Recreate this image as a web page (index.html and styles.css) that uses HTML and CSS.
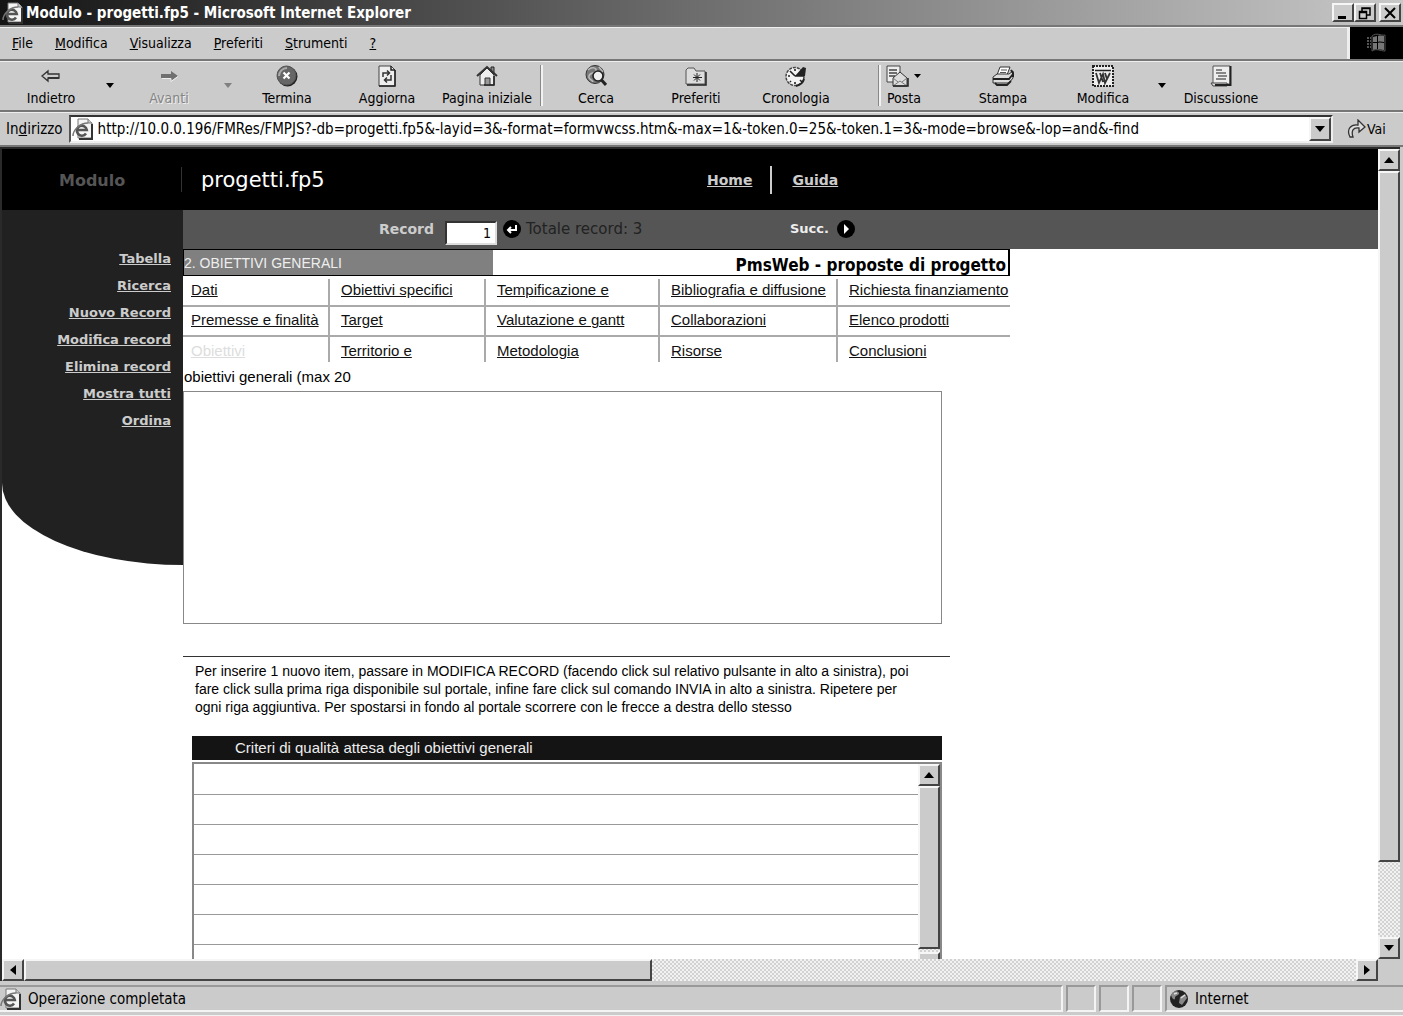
FILE: index.html
```html
<!DOCTYPE html>
<html lang="it">
<head>
<meta charset="utf-8">
<title>Modulo - progetti.fp5 - Microsoft Internet Explorer</title>
<link rel="stylesheet" href="styles.css">
</head>
<body>
<svg class="defs" width="0" height="0" aria-hidden="true">
  <symbol id="ie-page" viewBox="0 0 22 22">
    <path d="M6 1h10l4 4v15H6z" fill="#f4f4f4" stroke="#777"/>
    <path d="M20 6v15H7" fill="none" stroke="#333" stroke-width="2"/>
    <path d="M16 1v4h4" fill="#ccc" stroke="#777"/>
    <path d="M14 15.500a5 5 0 1 1 .8-3.500H6" fill="none" stroke="#555" stroke-width="2.600"/>
    <path d="M1 18C1 12 8 5 16 5" fill="none" stroke="#777" stroke-width="1.500"/>
  </symbol>
</svg>

<header class="titlebar">
  <svg class="page-icon" aria-hidden="true"><use href="#ie-page"/></svg>
  <h1>Modulo - progetti.fp5 - Microsoft Internet Explorer</h1>
  <button class="win" aria-label="Riduci a icona"><svg width="14" height="14" viewBox="0 0 14 14"><path d="M2 11.500h8" stroke="#000" stroke-width="3"/></svg></button>
  <button class="win" aria-label="Ripristina"><svg width="14" height="14" viewBox="0 0 14 14"><path d="M4 5V2h8v7H9M4 2.500h8M1.500 5.500h7v7h-7zM1 6.500h8" fill="none" stroke="#000" stroke-width="1.500"/></svg></button>
  <button class="win close" aria-label="Chiudi"><svg width="14" height="14" viewBox="0 0 14 14"><path d="M2 2l10 10M12 2L2 12" stroke="#000" stroke-width="2"/></svg></button>
</header>

<nav class="menubar">
  <button><u>F</u>ile</button>
  <button><u>M</u>odifica</button>
  <button><u>V</u>isualizza</button>
  <button><u>P</u>referiti</button>
  <button><u>S</u>trumenti</button>
  <button><u>?</u></button>
  <span class="throbber"><svg width="24" height="22" viewBox="0 0 24 22"><path d="M8 5l4-1v6H8zM13 4c2-1 4 0 6 0v6c-2 0-4-1-6 0zM8 11h4v6l-4 1zM13 11c2-1 4 0 6 0v7c-2 0-4-1-6 0z" fill="#777"/><path d="M2 6h4M2 9h4M2 12h4M2 15h4" stroke="#555" stroke-width="2" stroke-dasharray="2 1"/><path d="M7 4c5-4 8 0 13-1v16c-5 0-8-3-13 0z" fill="none" stroke="#555"/></svg></span>
</nav>

<div class="toolbar">
  <button class="tool"><svg width="22" height="22" viewBox="0 0 22 22"><path d="M2 11l6-5v3h11v4H8v3z" fill="#ccc" stroke="#333" stroke-width="1.300"/><path d="M8 13h11" stroke="#333" stroke-width="2"/></svg>Indietro</button>
  <button class="drop" aria-label="Cronologia indietro"><svg width="8" height="5" viewBox="0 0 8 5"><path d="M0 0h8L4 5z"/></svg></button>
  <button class="tool off"><svg width="22" height="22" viewBox="0 0 22 22"><path d="M20 11l-7-5v3H3v4h10v3z" fill="#707070"/><path d="M4 13.500h9v3l7-5" fill="none" stroke="#eee"/></svg>Avanti</button>
  <button class="drop off" aria-label="Cronologia avanti"><svg width="8" height="5" viewBox="0 0 8 5"><path d="M0 0h8L4 5z" fill="#808080"/></svg></button>
  <button class="tool"><svg width="22" height="22" viewBox="0 0 22 22"><circle cx="11.500" cy="11.500" r="10" fill="#222"/><circle cx="10.500" cy="10.500" r="9.500" fill="#666" stroke="#555"/><path d="M3 11a8 8 0 0 1 8-8" fill="none" stroke="#aaa" stroke-width="2"/><path d="M7.500 7.500l6 6M13.500 7.500l-6 6" stroke="#fff" stroke-width="2.200"/></svg>Termina</button>
  <button class="tool"><svg width="22" height="22" viewBox="0 0 22 22"><path d="M3 1h12l4 4v16H3z" fill="#eee" stroke="#444"/><path d="M15 1v4h4M19 5v16H3" fill="none" stroke="#222" stroke-width="1.500"/><path d="M7 12V8h6M11 5.500l2.500 2.500-2.500 2.500M15 10v5H9M11 12.500l-2.500 2.500 2.500 2.500" fill="none" stroke="#333" stroke-width="1.500"/></svg>Aggiorna</button>
  <button class="tool"><svg width="22" height="22" viewBox="0 0 22 22"><path d="M15 2h3v7h-3z" fill="#888" stroke="#222"/><path d="M4 10v10h14V10l-7-7z" fill="#eee" stroke="#333"/><path d="M1 11L11 2l10 9" fill="none" stroke="#333" stroke-width="2"/><path d="M9 20v-7h5v7" fill="#999" stroke="#333"/><path d="M18 11v9H8" fill="none" stroke="#222" stroke-width="1.500"/></svg>Pagina iniziale</button>
  <span class="sep"></span>
  <button class="tool"><svg width="22" height="22" viewBox="0 0 22 22"><circle cx="10" cy="9.500" r="9" fill="#777" stroke="#333"/><path d="M3 5c4-4 9-2 8 1s-6 1-7 5 3 3 4 6M14 2l4 5" fill="none" stroke="#bbb" stroke-width="1.500"/><circle cx="13" cy="11" r="5" fill="#eee" stroke="#222" stroke-width="1.600"/><path d="M16.500 15l4.500 5" stroke="#222" stroke-width="3"/></svg>Cerca</button>
  <button class="tool"><svg width="22" height="22" viewBox="0 0 22 22"><path d="M1 19V5l2-2h6l2 3h9v13z" fill="#ddd" stroke="#555"/><path d="M21 7v13H2" fill="none" stroke="#222" stroke-width="1.500"/><path d="M12 8v9M8 12.500h9M9 9.500l6 6M15 9.500l-6 6" stroke="#222"/></svg>Preferiti</button>
  <button class="tool"><svg width="24" height="22" viewBox="0 0 24 22"><circle cx="11" cy="11.500" r="9" fill="#f2f2f2" stroke="#444" stroke-width="1.500" stroke-dasharray="3 1"/><path d="M11 11l8-9 3 1-1 8z" fill="#222"/><path d="M11 11L6 6M11 11h9M11 4v2M4 11h2M11 17v2M7 16l-1 1M16 15l2 2" stroke="#222" stroke-width="1.600"/><path d="M20 14c-1 4-4 6-8 7" fill="none" stroke="#222" stroke-width="2"/></svg>Cronologia</button>
  <span class="sep wide"></span>
  <button class="tool mail"><svg width="36" height="22" viewBox="0 0 36 22"><path d="M1 1h13v16H1z" fill="#eee" stroke="#444"/><path d="M3 5h8M3 8h8M3 11h6" stroke="#444" stroke-width="1.500"/><path d="M7 13l7-6 7 6v8H7z" fill="#ddd" stroke="#333"/><path d="M7 21l7-5 7 5M7 13l5 4M21 13l-5 4" fill="none" stroke="#777"/><path d="M7 21h15v-8" fill="none" stroke="#222" stroke-width="1.500"/><path d="M28 9h7l-3.500 4z"/></svg>Posta</button>
  <button class="tool"><svg width="22" height="22" viewBox="0 0 22 22"><path d="M5 10l3-8h10l-3 8z" fill="#fff" stroke="#333"/><path d="M9 5h6M8 7.500h6" stroke="#555"/><path d="M1 12l4-3h12l4-3v7l-4 5H1z" fill="#ddd" stroke="#333"/><path d="M1 14h16l4-5M3 18l2 2h10l4-4" fill="none" stroke="#222" stroke-width="1.800"/><path d="M19 5l2 3v4" fill="none" stroke="#222" stroke-width="2"/></svg>Stampa</button>
  <button class="tool"><svg width="22" height="22" viewBox="0 0 22 22"><path d="M1 1h20v20H1z" fill="#eee" stroke="#222" stroke-width="2" stroke-dasharray="2 1"/><path d="M3 5.500h16" stroke="#222" stroke-width="1.500"/><path d="M4 8l3 10 4-9 2 9 5-10M8 8l3 9M13 8l2 6" fill="none" stroke="#333" stroke-width="1.800"/></svg>Modifica</button>
  <button class="drop" aria-label="Scegli editor"><svg width="8" height="5" viewBox="0 0 8 5"><path d="M0 0h8L4 5z"/></svg></button>
  <button class="tool"><svg width="22" height="22" viewBox="0 0 22 22"><path d="M3 1h17v18H3z" fill="#eee" stroke="#555"/><path d="M1 18h16v3H3z" fill="#ddd" stroke="#444"/><path d="M20.500 1v19H5" fill="none" stroke="#222" stroke-width="2"/><path d="M6 5h6M6 8h10M8 11h9M6 14h10" stroke="#666" stroke-width="1.500"/></svg>Discussione</button>
</div>

<form class="address">
  <label for="url">In<u>d</u>irizzo</label>
  <div class="combo">
    <svg class="page-icon" aria-hidden="true"><use href="#ie-page"/></svg>
    <input id="url" type="text" value="http://10.0.0.196/FMRes/FMPJS?-db=progetti.fp5&amp;-layid=3&amp;-format=formvwcss.htm&amp;-max=1&amp;-token.0=25&amp;-token.1=3&amp;-mode=browse&amp;-lop=and&amp;-find">
    <button type="button" class="bevel" aria-label="Apri elenco"><svg width="10" height="6" viewBox="0 0 10 6"><path d="M0 0h10L5 6z"/></svg></button>
  </div>
  <button type="button" class="go"><svg width="20" height="20" viewBox="0 0 20 20"><path d="M3 18C-1 10 4 5 11 6V1l7 7-6 5V9C6 8 4 12 6 18z" fill="#ddd" stroke="#333" stroke-width="1.300"/></svg>Vai</button>
</form>

<div class="viewport">
  <div class="page">
    <header class="site">
      <strong class="kind">Modulo</strong>
      <h2>progetti.fp5</h2>
      <nav><a href="#home">Home</a><a href="#guida">Guida</a></nav>
    </header>
    <div class="columns">
      <nav class="side">
        <a href="#tabella">Tabella</a>
        <a href="#ricerca">Ricerca</a>
        <a href="#nuovo">Nuovo Record</a>
        <a href="#modifica">Modifica record</a>
        <a href="#elimina">Elimina record</a>
        <a href="#tutti">Mostra tutti</a>
        <a href="#ordina">Ordina</a>
      </nav>
      <main>
        <form class="recordbar">
          <label for="rec">Record</label>
          <input id="rec" type="text" value="1">
          <button type="button" aria-label="Vai al record"><svg width="18" height="18" viewBox="0 0 18 18"><circle cx="9" cy="9" r="9"/><path d="M13 5v5H5M8 7l-3 3 3 3" fill="none" stroke="#fff" stroke-width="2"/></svg></button>
          <span class="total">Totale record: 3</span>
          <button type="button" class="next">Succ.<svg width="18" height="18" viewBox="0 0 18 18"><circle cx="9" cy="9" r="9"/><path d="M7 4l5 5-5 5z" fill="#fff"/></svg></button>
        </form>
        <div class="layout">
          <div class="heading">
            <span class="section">2. OBIETTIVI GENERALI</span>
            <strong>PmsWeb - proposte di progetto</strong>
          </div>
          <table class="tabs">
            <colgroup><col class="c1"><col class="c2"><col class="c3"><col class="c4"><col class="c5"></colgroup>
            <tr><td><a href="#t1">Dati</a></td><td><a href="#t4">Obiettivi specifici</a></td><td><a href="#t7">Tempificazione e</a></td><td><a href="#t10">Bibliografia e diffusione</a></td><td><a href="#t13">Richiesta finanziamento</a></td></tr>
            <tr><td><a href="#t2">Premesse e finalità</a></td><td><a href="#t5">Target</a></td><td><a href="#t8">Valutazione e gantt</a></td><td><a href="#t11">Collaborazioni</a></td><td><a href="#t14">Elenco prodotti</a></td></tr>
            <tr><td><a href="#t3" class="current">Obiettivi</a></td><td><a href="#t6">Territorio e</a></td><td><a href="#t9">Metodologia</a></td><td><a href="#t12">Risorse</a></td><td><a href="#t15">Conclusioni</a></td></tr>
          </table>
          <label class="field" for="goals">obiettivi generali (max 20</label>
          <textarea id="goals"></textarea>
          <hr>
          <p class="note">Per inserire 1 nuovo item, passare in MODIFICA RECORD (facendo click sul relativo pulsante in alto a sinistra), poi<br>fare click sulla prima riga disponibile sul portale, infine fare click sul comando INVIA in alto a sinistra. Ripetere per<br>ogni riga aggiuntiva. Per spostarsi in fondo al portale scorrere con le frecce a destra dello stesso</p>
          <section class="portal">
            <h3>Criteri di qualità attesa degli obiettivi generali</h3>
            <div class="list">
              <table>
                <tr><td></td></tr><tr><td></td></tr><tr><td></td></tr><tr><td></td></tr><tr><td></td></tr><tr><td></td></tr><tr><td></td></tr>
              </table>
              <div class="scroll inner">
                <button class="bevel" aria-label="Su"><svg width="10" height="6" viewBox="0 0 10 6"><path d="M0 6h10L5 0z"/></svg></button>
                <div class="bevel thumb"></div>
                <button class="bevel" aria-label="Giù"><svg width="10" height="6" viewBox="0 0 10 6"><path d="M0 0h10L5 6z"/></svg></button>
              </div>
            </div>
          </section>
        </div>
      </main>
    </div>
  </div>
  <div class="scroll vertical">
    <button class="bevel" aria-label="Scorri su"><svg width="10" height="6" viewBox="0 0 10 6"><path d="M0 6h10L5 0z"/></svg></button>
    <div class="bevel thumb"></div>
    <div class="rest"></div>
    <button class="bevel" aria-label="Scorri giù"><svg width="10" height="6" viewBox="0 0 10 6"><path d="M0 0h10L5 6z"/></svg></button>
  </div>
  <div class="scroll horizontal">
    <button class="bevel" aria-label="Scorri a sinistra"><svg width="6" height="10" viewBox="0 0 6 10"><path d="M6 0v10L0 5z"/></svg></button>
    <div class="bevel thumb"></div>
    <div class="rest"></div>
    <button class="bevel" aria-label="Scorri a destra"><svg width="6" height="10" viewBox="0 0 6 10"><path d="M0 0v10l6-5z"/></svg></button>
  </div>
  <div class="corner"></div>
</div>

<footer class="status">
  <div class="cell message"><svg class="page-icon" aria-hidden="true"><use href="#ie-page"/></svg>Operazione completata</div>
  <div class="cell"></div>
  <div class="cell"></div>
  <div class="cell"></div>
  <div class="cell zone"><svg width="20" height="20" viewBox="0 0 20 20"><circle cx="10" cy="10" r="9" fill="#222"/><path d="M2 6c3-5 7-4 8-2s-4 2-4 5-3 1-4-3zM11 8l5-3 2 4-5 7-3-2z" fill="#888"/><path d="M12 9l4-3M5 5l3-1" stroke="#ddd" stroke-width="1.500"/></svg>Internet</div>
</footer>
</body>
</html>
```
FILE: styles.css
```css
* { box-sizing: border-box; }

body {
  margin: 0;
  height: 100vh;
  display: flex;
  flex-direction: column;
  background: #cbcbcb;
  color: #000;
  font: 15px/18px "DejaVu Sans Condensed", "DejaVu Sans", sans-serif;
  overflow: hidden;
}

svg { display: block; flex: none; }
.defs { position: absolute; }
.page-icon { width: 22px; height: 22px; }

button {
  margin: 0;
  padding: 0;
  border: 0;
  background: none;
  color: inherit;
  font: inherit;
}

h1, h2, h3, p { margin: 0; font: inherit; }

.bevel, .win {
  display: grid;
  place-items: center;
  background: #cbcbcb;
  border: 2px solid;
  border-color: #f6f6f6 #444 #444 #f6f6f6;
}

/* Window chrome */
.titlebar {
  display: flex;
  align-items: center;
  height: 25px;
  flex: none;
  padding: 0 2px;
  background: linear-gradient(90deg, #141414, #c8c8c8);
  color: #fff;
}
.titlebar h1 { flex: 1; margin-left: 2px; font-weight: bold; font-size: 15px; }
.win { width: 22px; height: 19px; }
.close { margin-left: 3px; }

.menubar {
  display: flex;
  align-items: center;
  gap: 22px;
  height: 36px;
  flex: none;
  padding-left: 12px;
  border: solid #777;
  border-width: 2px 0;
  box-shadow: inset 0 1px #eee;
  font-size: 14px;
}
.throbber {
  display: grid;
  place-items: center;
  align-self: stretch;
  width: 56px;
  margin-left: auto;
  border-left: 3px solid #eee;
  background: #000;
}

.toolbar {
  display: flex;
  height: 51px;
  flex: none;
  padding-left: 1px;
  border-bottom: 2px solid #777;
  box-shadow: inset 0 1px #eee;
  font-size: 14px;
}
.tool {
  display: flex;
  flex-direction: column;
  align-items: center;
  gap: 2px;
  width: 100px;
  padding-top: 4px;
}
.drop { display: grid; place-items: center; width: 18px; }
.off { color: #858585; text-shadow: 1px 1px #eee; }
.sep {
  width: 3px;
  margin: 4px 3px;
  border: solid;
  border-width: 0 2px 0 1px;
  border-color: #888 #f2f2f2 #888 #888;
}
.sep.wide { margin-left: 32px; margin-right: 0; }
.mail { width: 72px; padding-right: 26px; }

.address {
  display: flex;
  align-items: center;
  height: 35px;
  flex: none;
  padding-left: 6px;
  border-bottom: 2px solid #777;
  box-shadow: inset 0 1px #eee;
}
.combo {
  display: flex;
  align-items: center;
  flex: 1;
  height: 28px;
  margin-left: 6px;
  padding-left: 1px;
  background: #fff;
  border: 2px solid;
  border-color: #333 #eee #eee #555;
}
.combo input {
  flex: 1;
  min-width: 0;
  padding: 0 4px;
  border: 0;
  background: none;
  font: inherit;
}
.combo .bevel { width: 22px; height: 24px; }
.go { display: flex; align-items: center; width: 70px; padding-left: 14px; font-size: 14px; }

/* Browser viewport with its scroll bars */
.viewport {
  display: grid;
  grid-template-columns: 1fr 22px;
  grid-template-rows: 1fr 22px;
  flex: 1;
  min-height: 0;
  margin-right: 3px;
  border: solid #2a2a2a;
  border-width: 2px 0 0 2px;
}
.page { overflow: hidden; min-width: 0; min-height: 0; background: #fff; }
.scroll {
  display: flex;
  background: repeating-conic-gradient(#f2f2f2 0 25%, #d2d2d2 0 50%) 0 0 / 4px 4px;
}
.scroll > button { flex: none; width: 22px; height: 22px; }
.vertical { flex-direction: column; }
.vertical .thumb { flex: 691; }
.vertical .rest { flex: 75; }
.horizontal .thumb { flex: 626; }
.horizontal .rest { flex: 707; }

/* Site header */
.site {
  display: flex;
  align-items: center;
  height: 61px;
  background: #000;
  color: #fff;
  font-family: "DejaVu Sans", sans-serif;
}
.kind {
  width: 180px;
  padding: 3px 0 0 57px;
  line-height: 22px;
  border-right: 1px solid #333;
  color: #555;
  font-size: 16px;
}
.site h2 { width: 525px; padding-left: 19px; font-size: 21px; }
.site nav { display: flex; font-weight: bold; font-size: 14px; }
.site nav a { color: #ccc; line-height: 28px; }
.site nav a + a { margin-left: 18px; padding-left: 20px; border-left: 2px solid #ccc; }

.columns { display: flex; align-items: flex-start; }
.side {
  display: flex;
  flex-direction: column;
  align-items: flex-end;
  width: 181px;
  height: 355px;
  flex: none;
  padding: 35px 12px 0 0;
  background: #212121;
  border-bottom-left-radius: 181px 82px;
  font: bold 13px/27px "DejaVu Sans", sans-serif;
}
.side a { color: #ccc; }
main { flex: 1; min-width: 0; }

.recordbar {
  display: flex;
  align-items: center;
  height: 39px;
  padding-bottom: 2px;
  background: #555;
  font-family: "DejaVu Sans", sans-serif;
  font-size: 14px;
}
.recordbar label { width: 251px; text-align: right; font-weight: bold; color: #ccc; }
.recordbar input {
  width: 52px;
  height: 24px;
  margin: 8px 6px 0 11px;
  padding: 0 4px;
  border: 2px solid;
  border-color: #333 #ddd #ddd #333;
  background: #fff;
  text-align: right;
  font: 14px "DejaVu Sans Condensed", sans-serif;
}
.total { width: 269px; padding-left: 5px; color: #222; font-size: 15px; }
.next { display: flex; align-items: center; gap: 8px; font-weight: bold; color: #eee; font-size: 13px; }

/* Record layout */
.layout { max-width: 827px; font-family: "Liberation Sans", sans-serif; font-size: 15px; }
.heading {
  display: flex;
  justify-content: space-between;
  height: 27px;
  border: 1px solid #000;
  border-right-width: 2px;
  line-height: 27px;
}
.section { width: 309px; background: #808080; color: #eee; font-size: 14px; }
.heading strong { padding: 2px 2px 0 0; font-family: "DejaVu Sans Condensed", sans-serif; font-size: 17px; }

.tabs { width: 100%; margin-top: 3px; border-collapse: collapse; table-layout: fixed; }
.c1 { width: 146px; }
.c2 { width: 156px; }
.c3 { width: 174px; }
.c4 { width: 178px; }
.tabs td {
  height: 30px;
  padding: 0 0 2px 11px;
  border-left: 2px solid #aaa;
  border-top: 2px solid #aaa;
  white-space: nowrap;
}
.tabs td:first-child { padding-left: 8px; border-left: 0; }
.tabs tr:first-child td { height: 27px; padding-bottom: 4px; border-top: 0; }
.tabs tr:last-child td { height: 26px; padding-top: 2px; padding-bottom: 0; }
.tabs a { color: #111; }
.tabs a.current { color: #ddd; }

.field { display: block; margin-top: 4px; padding-left: 1px; line-height: 22px; }
textarea {
  display: block;
  width: 759px;
  height: 233px;
  margin-top: 3px;
  border: 1px solid #888;
  border-radius: 0;
  resize: none;
}
hr { width: 767px; margin: 32px 0 0; border: 0; border-top: 1px solid #333; }
.note { margin: 5px 0 0 12px; font-size: 14px; white-space: nowrap; }

.portal { width: 750px; margin: 20px 0 0 9px; }
.portal h3 {
  height: 24px;
  padding-left: 43px;
  line-height: 24px;
  background: #141414;
  color: #eee;
}
.list { display: flex; height: 212px; margin-top: 2px; border: 2px solid #888; border-bottom: 0; }
.list table { flex: 1; border-collapse: collapse; }
.list td { height: 30px; border-bottom: 1px solid #999; }
.inner { flex-direction: column; width: 22px; flex: none; }
.inner .thumb { height: 163px; margin-bottom: 3px; flex: none; }

/* Status bar */
.status {
  display: flex;
  gap: 3px;
  height: 35px;
  flex: none;
  padding: 4px 0 3px;
  border-bottom: 1px solid #f2f2f2;
}
.cell {
  display: flex;
  align-items: center;
  width: 30px;
  border: 2px solid;
  border-color: #999 #f4f4f4 #f4f4f4 #999;
}
.message { flex: 1; gap: 6px; border-left: 0; }
.zone { width: 238px; gap: 6px; padding-left: 2px; border-right: 0; }
```
